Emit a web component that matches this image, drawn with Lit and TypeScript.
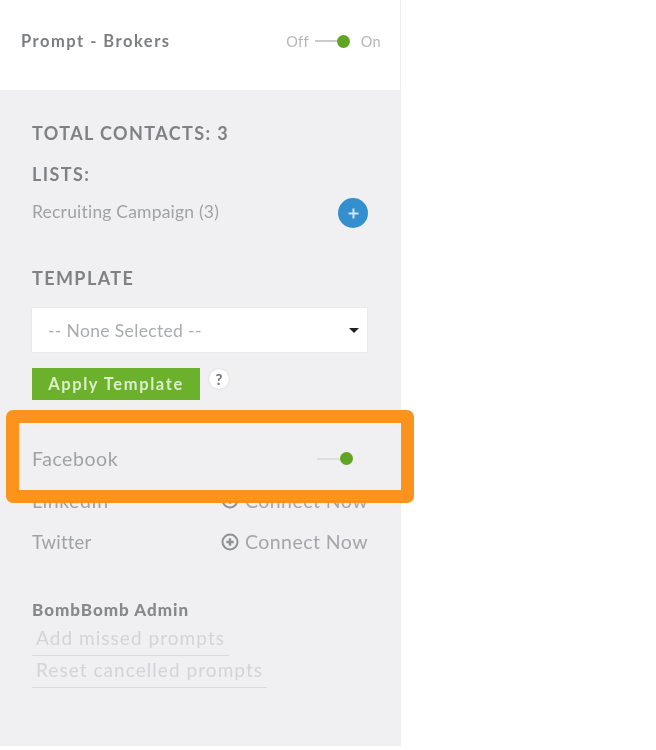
import { LitElement, html, css } from "lit";
import { customElement } from "lit/decorators.js";

@customElement("app-root")
export class AppRoot extends LitElement {
  static styles = css`
    :host { display: block; width: 656px; height: 750px; position: relative; overflow: hidden; background: #fff; font-family: Lato, "Liberation Sans", sans-serif; color: #8f9193; }
    .panel { width: 401px; height: 746px; display: flex; flex-direction: column; filter: blur(0.7px); }
    .head { height: 90px; box-sizing: border-box; padding: 0 19px 8px 21px; display: flex; align-items: center; justify-content: space-between; border-right: 1px solid #eeeeef; }
    .title { font-size: 16.5px; font-weight: 700; letter-spacing: 1.5px; color: #7c7e80; }
    .state { display: flex; align-items: center; font-size: 14.5px; color: #b4b6b8; letter-spacing: .3px; }
    .toggle { display: flex; align-items: center; width: 37px; margin: 0 9px 0 6px; }
    .track { width: 24px; height: 1.5px; background: #c9cbcc; }
    .knob { width: 13px; height: 13px; border-radius: 50%; background: #5fa522; margin-left: -2px; }
    .body { flex: 1; background: #f0f0f2; padding: 33px 33px 0 32px; display: flex; flex-direction: column; }
    .h { font-size: 18px; font-weight: 700; letter-spacing: 1.4px; line-height: 20px; color: #7f8183; }
    .lists { margin-top: 21px; }
    .row { display: flex; align-items: center; justify-content: space-between; }
    .camp { margin-top: 14px; height: 30px; }
    .camp .muted { font-size: 17.5px; letter-spacing: .2px; color: #a0a2a4; margin-top: -3px; }
    .plus { width: 30px; height: 30px; border-radius: 50%; background: #338fce; display: flex; align-items: center; justify-content: center; }
    .tpl { margin-top: 40px; }
    .select { margin: 20px 1px 0 0; height: 44px; background: #fff; box-shadow: 0 0 2px #dcdcde; display: flex; align-items: center; justify-content: space-between; padding: 0 8px 0 16px; font-size: 17.5px; color: #a9abad; letter-spacing: .35px; }
    .caret { width: 0; height: 0; border-left: 5px solid transparent; border-right: 5px solid transparent; border-top: 5px solid #222; }
    .actions { display: flex; margin-top: 16px; gap: 9px; }
    .btn { width: 168px; height: 32px; background: #6cb12b; color: #dbeec9; font-size: 16.5px; font-weight: 700; letter-spacing: 1.6px; display: flex; align-items: center; justify-content: center; }
    .help { width: 20px; height: 20px; margin-top: 1px; border-radius: 50%; background: #fff; color: #6f7173; font-size: 15px; font-weight: 700; display: flex; align-items: center; justify-content: center; box-shadow: 0 0 2px #c9c9cb; }
    .social { height: 41.5px; }
    .fb { margin-top: 38px; margin-right: 15px; }
    .fb .toggle { width: 36px; margin: 0; }
    .fb .track { background: #dcdddd; width: 23px; }
    .fb .knob { margin-left: 0; }
    .connect { display: flex; align-items: center; gap: 6px; font-size: 19.5px; letter-spacing: .45px; color: #a4a6a8; }
    .sname { font-size: 18.5px; letter-spacing: .2px; color: #a0a2a4; }
    .wide { font-size: 19.5px; letter-spacing: .55px; }
    .admin { margin-top: 37px; font-size: 17px; font-weight: 900; letter-spacing: 1px; color: #87898b; line-height: 20px; }
    .link { display: block; width: fit-content; padding: 0 4px 5px 4px; font-size: 19px; line-height: 25px; letter-spacing: 1.05px; color: #d3d4d6; border-bottom: 1.5px solid #d8d9da; margin-top: 5px; }
    .link + .link { margin-top: 1px; }
    .frame { position: absolute; left: 6px; top: 410px; width: 408px; height: 93px; box-sizing: border-box; border: 13.5px solid #fb931d; border-radius: 7px; }
  `;

  private connectIcon() {
    return html`<svg width="18" height="18" viewBox="0 0 18 18" fill="none">
      <circle cx="9" cy="9" r="7.5" stroke="#8f9193" stroke-width="2"></circle>
      <path d="M9 5.3v7.4M5.3 9h7.4" stroke="#8f9193" stroke-width="2.4"></path>
    </svg>`;
  }

  render() {
    return html`
      <div class="panel">
        <div class="head">
          <div class="title">Prompt - Brokers</div>
          <div class="state">
            <span>Off</span>
            <span class="toggle"><span class="track"></span><span class="knob"></span></span>
            <span>On</span>
          </div>
        </div>
        <div class="body">
          <div class="h">TOTAL CONTACTS: 3</div>
          <div class="h lists">LISTS:</div>
          <div class="row camp">
            <span class="muted">Recruiting Campaign (3)</span>
            <span class="plus"><svg width="13" height="13" viewBox="0 0 13 13"><path d="M6.5 1.5v10M1.5 6.5h10" stroke="#cfe6f5" stroke-width="2"></path></svg></span>
          </div>
          <div class="h tpl">TEMPLATE</div>
          <div class="select"><span>-- None Selected --</span><span class="caret"></span></div>
          <div class="actions">
            <div class="btn">Apply Template</div>
            <div class="help">?</div>
          </div>
          <div class="row social fb">
            <span class="sname wide">Facebook</span>
            <span class="toggle"><span class="track"></span><span class="knob"></span></span>
          </div>
          <div class="row social">
            <span class="sname wide">LinkedIn</span>
            <span class="connect">${this.connectIcon()}Connect Now</span>
          </div>
          <div class="row social">
            <span class="sname">Twitter</span>
            <span class="connect">${this.connectIcon()}Connect Now</span>
          </div>
          <div class="admin">BombBomb Admin</div>
          <span class="link">Add missed prompts</span>
          <span class="link">Reset cancelled prompts</span>
        </div>
      </div>
      <div class="frame"></div>
    `;
  }
}
